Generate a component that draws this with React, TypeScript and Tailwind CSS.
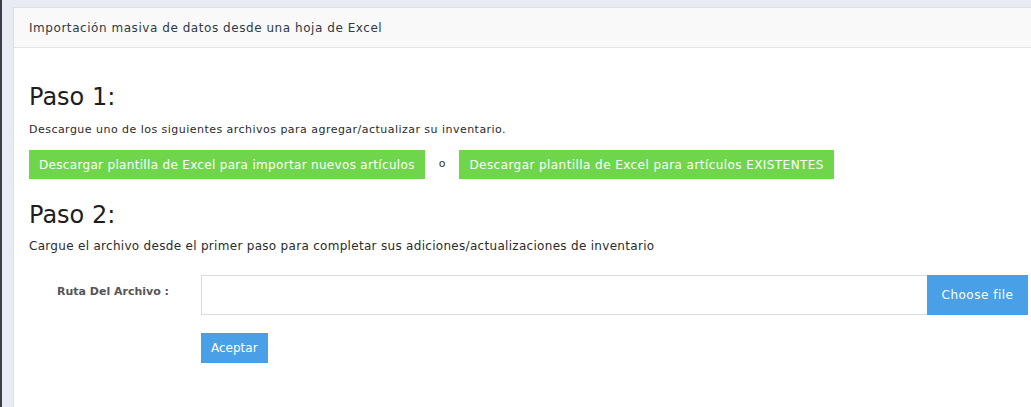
export default function App() {
  return (
    <div
      className="min-h-[407px] h-[407px] overflow-hidden bg-[#e8ebf3] border-l-2 border-[#3b3f4a] pl-[11px] pt-[7px]"
      style={{ fontFamily: '"DejaVu Sans", Verdana, sans-serif' }}
    >
      <div className="h-full bg-white border-l border-t border-[#dcdfe6]">
        {/* Header */}
        <div className="h-[40px] flex items-center px-[15px] bg-[#f9f9f9] border-b border-[#e4e4e4]">
          <span className="text-[12px] tracking-[0.55px] text-[#2f3a45]">
            Importación masiva de datos desde una hoja de Excel
          </span>
        </div>

        <div className="pl-[15px] pr-[3px]">
          {/* Paso 1 */}
          <h2 className="mt-[35px] text-[24px] leading-[28px] text-[#1e1e1e]">Paso 1:</h2>
          <p className="mt-[12px] text-[11px] leading-[14px] tracking-[0.47px] text-[#2b2b2b]">
            Descargue uno de los siguientes archivos para agregar/actualizar su inventario.
          </p>
          <div className="mt-[13px] flex items-center">
            <button className="h-[29px] px-[10px] bg-[#6fd64c] text-white text-[12px] tracking-[0.32px]">
              Descargar plantilla de Excel para importar nuevos artículos
            </button>
            <span className="mx-[14px] text-[11px] text-[#333]">o</span>
            <button className="h-[29px] px-[10px] bg-[#6fd64c] text-white text-[12px] tracking-[0.43px]">
              Descargar plantilla de Excel para artículos EXISTENTES
            </button>
          </div>

          {/* Paso 2 */}
          <h2 className="mt-[22px] text-[24px] leading-[28px] text-[#1e1e1e]">Paso 2:</h2>
          <p className="mt-[10px] text-[12px] leading-[14px] tracking-[0.3px] text-[#2b2b2b]">
            Cargue el archivo desde el primer paso para completar sus adiciones/actualizaciones de inventario
          </p>

          <div className="mt-[22px] flex">
            <label className="w-[172px] pl-[28px] pt-[9px] text-[11px] font-bold text-[#555]">
              Ruta Del Archivo :
            </label>
            <div className="flex-1">
              <div className="flex h-[40px]">
                <div className="flex-1 border border-[#d9dbe3] border-r-0" />
                <button className="w-[101px] bg-[#4aa0e6] text-white text-[12px] tracking-[0.5px]">
                  Choose file
                </button>
              </div>
              <button className="mt-[18px] h-[30px] px-[10px] bg-[#4aa0e6] text-white text-[12px]">
                Aceptar
              </button>
            </div>
          </div>
        </div>
      </div>
    </div>
  )
}
